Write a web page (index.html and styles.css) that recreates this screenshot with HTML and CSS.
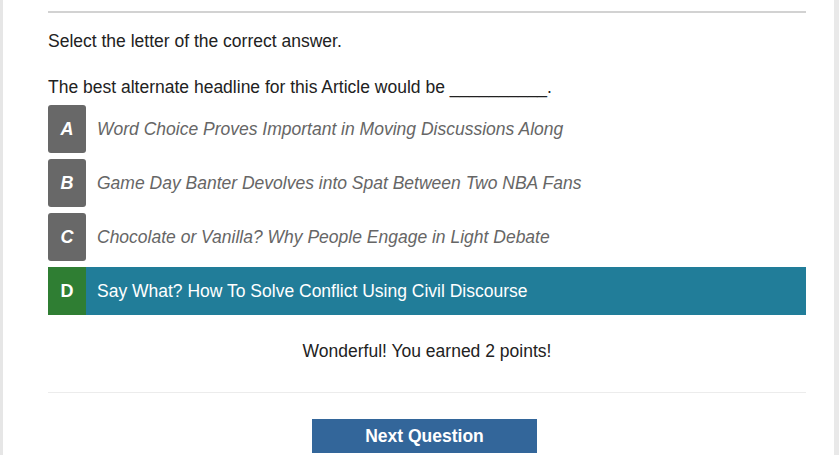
FILE: index.html
```html
<!DOCTYPE html>
<html lang="en">
<head>
<meta charset="utf-8">
<title>Question</title>
<link rel="stylesheet" href="styles.css">
</head>
<body>
<div class="page">
  <div class="content">
    <hr class="top-rule">
    <p class="instructions">Select the letter of the correct answer.</p>
    <p class="question">The best alternate headline for this Article would be __________.</p>
    <ul class="options">
      <li class="option"><span class="letter">A</span><span class="label">Word Choice Proves Important in Moving Discussions Along</span></li>
      <li class="option"><span class="letter">B</span><span class="label">Game Day Banter Devolves into Spat Between Two NBA Fans</span></li>
      <li class="option"><span class="letter">C</span><span class="label">Chocolate or Vanilla? Why People Engage in Light Debate</span></li>
      <li class="option correct"><span class="letter">D</span><span class="label">Say What? How To Solve Conflict Using Civil Discourse</span></li>
    </ul>
    <p class="feedback">Wonderful! You earned 2 points!</p>
    <hr class="bottom-rule">
    <div class="actions"><button class="next">Next Question</button></div>
  </div>
</div>
</body>
</html>
```
FILE: styles.css
```css
html, body {
  margin: 0;
  padding: 0;
  background: #fff;
}
body {
  font-family: "Liberation Sans", Arial, sans-serif;
  font-size: 17.5px;
  color: #222;
}
.page {
  width: 839px;
  height: 455px;
  box-sizing: border-box;
  border-left: 3px solid #e6e6e6;
  border-right: 5px solid #e9e9e9;
  overflow: hidden;
}
.content {
  padding: 11px 28px 0 45px;
}
.top-rule {
  margin: 0;
  border: 0;
  height: 2px;
  background: #d2d2d2;
}
.instructions {
  margin: 18px 0 0;
  line-height: 20px;
}
.question {
  margin: 26px 0 0;
  line-height: 20px;
}
.options {
  list-style: none;
  margin: 8px 0 0;
  padding: 0;
  display: flex;
  flex-direction: column;
  gap: 6px;
}
.option {
  display: flex;
  align-items: center;
  height: 48px;
}
.letter {
  width: 38px;
  height: 48px;
  border-radius: 3px;
  background: #686868;
  color: #fff;
  font-weight: bold;
  font-style: italic;
  font-size: 18px;
  display: flex;
  align-items: center;
  justify-content: center;
  flex: none;
}
.label {
  margin-left: 11px;
  font-style: italic;
  color: #666;
}
.option.correct {
  background: #217d99;
}
.option.correct .letter {
  background: #2f7e33;
  border-radius: 0;
  font-style: normal;
}
.option.correct .label {
  color: #fff;
  font-style: normal;
}
.feedback {
  margin: 26px 0 0;
  line-height: 20px;
  text-align: center;
}
.bottom-rule {
  margin: 31px 0 0;
  border: 0;
  height: 1px;
  background: #ececec;
}
.actions {
  display: flex;
  justify-content: center;
  padding-top: 26px;
}
.next {
  width: 225px;
  height: 34px;
  border: 0;
  background: #33669a;
  color: #fff;
  font-family: "Liberation Sans", Arial, sans-serif;
  font-weight: bold;
  font-size: 17.5px;
  margin-right: 5px;
}
```
